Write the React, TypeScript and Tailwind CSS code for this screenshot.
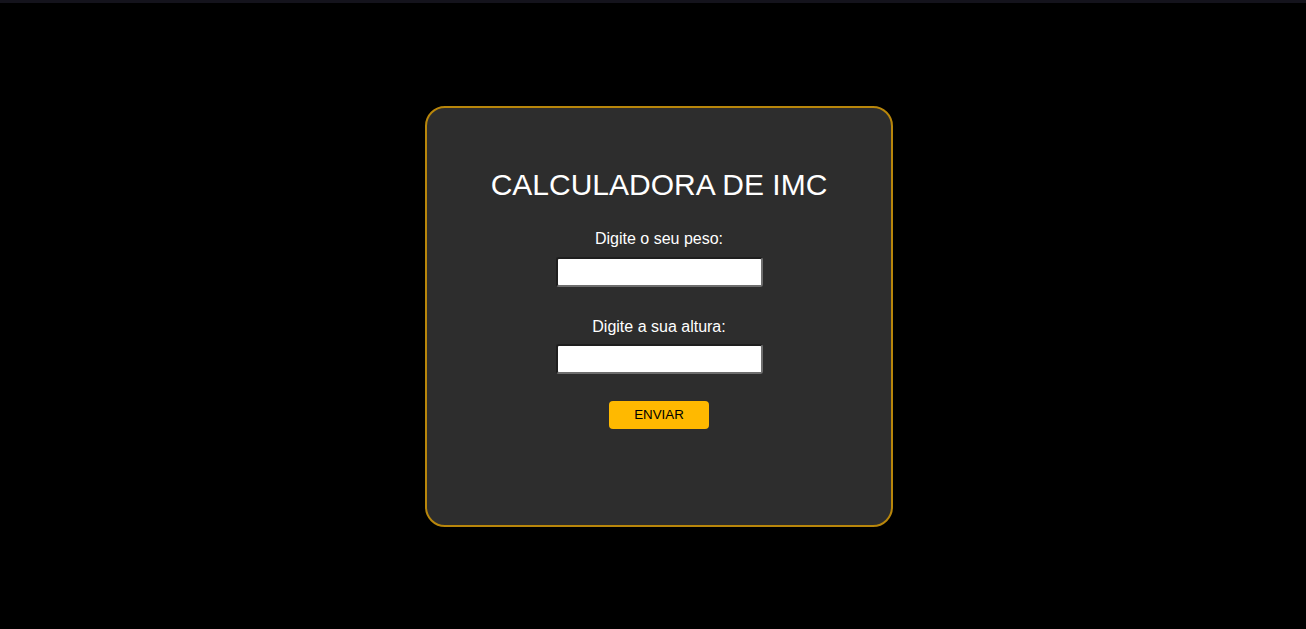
export default function App() {
  return (
    <div className="min-h-screen bg-black font-['Liberation_Sans',Arial,sans-serif]">
      <div className="h-[3px] bg-[#14131c]" />
      <div className="flex justify-center pl-[12px] pt-[103px]">
        <form
          className="flex h-[421px] w-[468px] flex-col items-center rounded-[20px] border-2 border-[#b8860b] bg-[#2d2d2d] pt-[58px]"
          onSubmit={(e) => e.preventDefault()}
        >
          <h1 className="text-[30px] leading-[37px] text-white">CALCULADORA DE IMC</h1>

          <label className="mt-[27px] text-[16px] leading-[18px] text-white">Digite o seu peso:</label>
          <input
            type="text"
            className="mt-[9px] h-[30px] w-[207px] rounded-[3px] border-2 border-t-[#1e1e1e] border-l-[#1e1e1e] border-r-[#6e6e6e] border-b-[#6e6e6e] bg-white px-1 text-black outline-none"
          />

          <label className="mt-[31px] text-[16px] leading-[18px] text-white">Digite a sua altura:</label>
          <input
            type="text"
            className="mt-[8px] h-[30px] w-[207px] rounded-[3px] border-2 border-t-[#1e1e1e] border-l-[#1e1e1e] border-r-[#6e6e6e] border-b-[#6e6e6e] bg-white px-1 text-black outline-none"
          />

          <button
            type="submit"
            className="mt-[27px] h-[28px] w-[100px] rounded-[4px] bg-[#ffb900] text-[13.33px] text-black"
          >
            ENVIAR
          </button>
        </form>
      </div>
    </div>
  );
}
